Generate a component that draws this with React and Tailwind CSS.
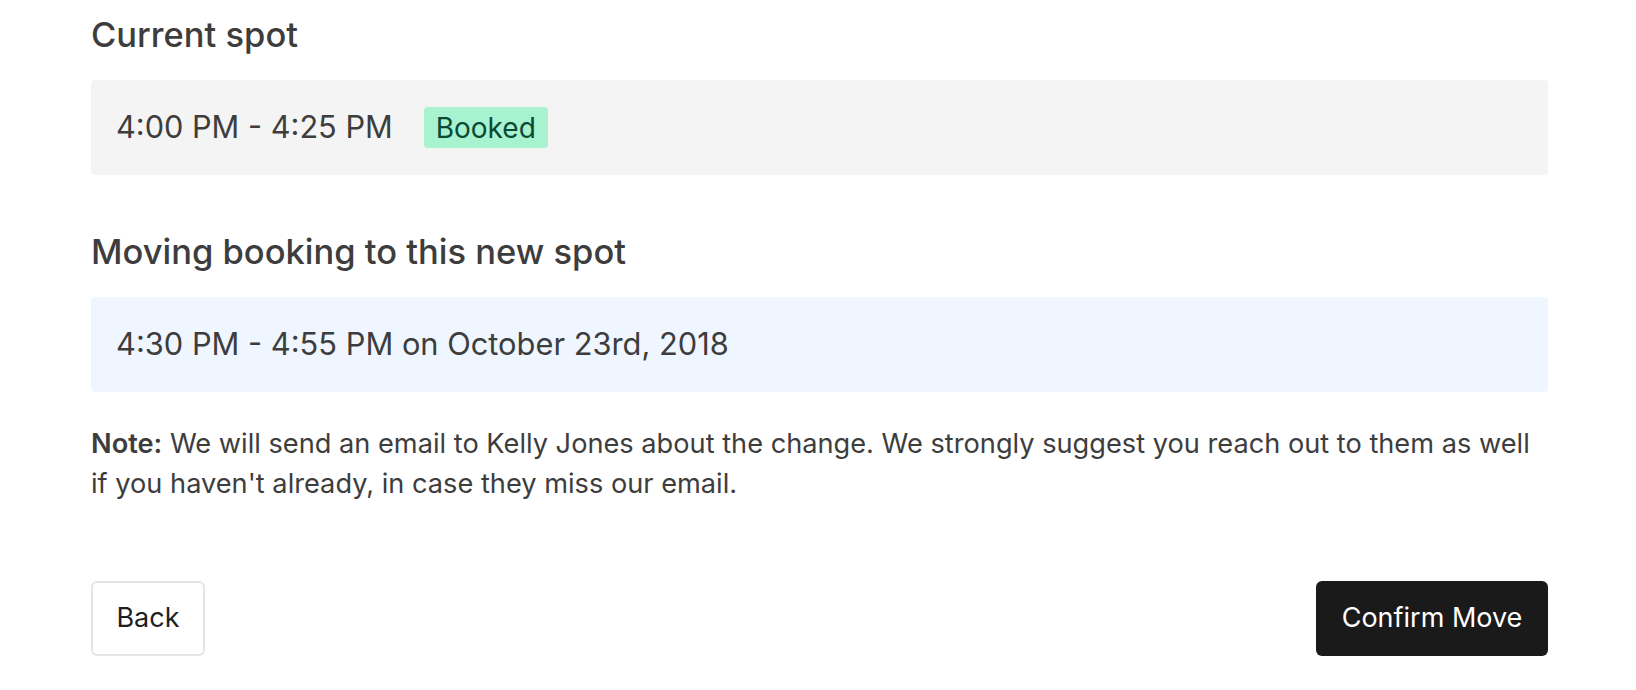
export default function App() {
  return (
    <div
      className="w-[1636px] h-[690px] bg-white pl-[91px] pr-[88px] pt-[15px] text-[#3d3d3d]"
      style={{ fontFamily: 'Inter, "Noto Sans", sans-serif' }}
    >
      <h2 className="text-[34.5px] leading-[40px] font-medium">Current spot</h2>
      <div className="mt-[25px] h-[95px] rounded bg-[#f4f4f4] px-[25px] flex items-center gap-[31px]">
        <span className="text-[30.7px]">4:00 PM - 4:25 PM</span>
        <span className="h-[41px] px-[12px] flex items-center rounded bg-[#a7f3d0] text-[#0a4a35] text-[28px]">
          Booked
        </span>
      </div>

      <h2 className="mt-[57px] text-[34.5px] leading-[40px] font-medium">Moving booking to this new spot</h2>
      <div className="mt-[25px] h-[95px] rounded bg-[#eff6ff] px-[25px] flex items-center">
        <span className="text-[30.8px]">4:30 PM - 4:55 PM on October 23rd, 2018</span>
      </div>

      <p className="mt-[32px] text-[27.2px] leading-[40px]">
        <span className="font-semibold">Note:</span> We will send an email to Kelly Jones about the change. We strongly
        suggest you reach out to them as well if you haven't already, in case they miss our email.
      </p>

      <div className="mt-[77px] flex justify-between">
        <button className="h-[75px] w-[114px] rounded-md border-2 border-[#e5e5e5] bg-white text-[27px] text-[#1f1f1f]">
          Back
        </button>
        <button className="h-[75px] w-[232px] rounded-md bg-[#1a1a1a] text-[27px] text-white">
          Confirm Move
        </button>
      </div>
    </div>
  );
}
